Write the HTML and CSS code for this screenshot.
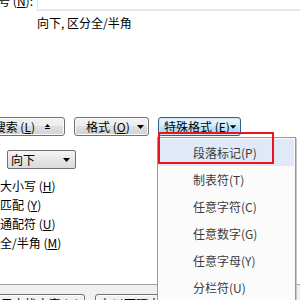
FILE: index.html
```html
<!DOCTYPE html>
<html lang="zh-CN">
<head>
  <meta charset="UTF-8">
  <title>查找和替换</title>
  <link rel="stylesheet" href="styles.css">
</head>
<body>
  <div class="find-row">
    <div class="find-lbl"><span>符号 (<u>N</u>):</span></div>
    <div class="find-box"></div>
  </div>
  <div class="hint">向下, 区分全/半角</div>

  <div class="buttons">
    <div class="btn btn-less">
      <span>更少搜索 (<u>L</u>)</span>
      <svg width="7" height="7" viewBox="0 0 7 7"><path d="M3.5 1 L6 4 L1 4 Z" fill="#000"/><rect x="1" y="5" width="5" height="1" fill="#000"/></svg>
    </div>
    <div class="btn btn-format">
      <span>格式 (<u>O</u>)</span>
      <svg width="7" height="4" viewBox="0 0 7 4"><path d="M0 0 H7 L3.5 4 Z" fill="#000"/></svg>
    </div>
    <div class="btn btn-special">
      <span>特殊格式 (<u>E</u>)</span>
      <svg width="7" height="4" viewBox="0 0 7 4"><path d="M0 0 H7 L3.5 4 Z" fill="#000"/></svg>
    </div>
  </div>

  <div class="select">
    <span>向下</span>
    <svg width="7" height="4" viewBox="0 0 7 4"><path d="M0 0 H7 L3.5 4 Z" fill="#000"/></svg>
  </div>

  <div class="options">
    <div class="opt">大小写 (<u>H</u>)</div>
    <div class="opt">匹配 (<u>Y</u>)</div>
    <div class="opt">通配符 (<u>U</u>)</div>
    <div class="opt">全/半角 (<u>M</u>)</div>
  </div>

  <div class="footer">
    <div class="btn btn-foot-a">突出显示查找内容 (<u>R</u>)</div>
    <div class="btn btn-foot-b">在以下项中查找 (<u>I</u>)</div>
  </div>

  <ul class="menu">
    <li class="menu-item active">段落标记(P)</li>
    <li class="menu-item">制表符(T)</li>
    <li class="menu-item">任意字符(C)</li>
    <li class="menu-item">任意数字(G)</li>
    <li class="menu-item">任意字母(Y)</li>
    <li class="menu-item">分栏符(U)</li>
  </ul>
  <div class="mark"></div>
</body>
</html>
```

FILE: styles.css
```css
body {
  margin: 0;
  width: 300px;
  height: 300px;
  overflow: hidden;
  position: relative;
  background: #fff;
  color: #000;
  font: 12px/14px "Noto Sans CJK SC", "DejaVu Sans", sans-serif;
}
u {
  text-decoration: underline;
}

.find-row {
  display: flex;
  height: 11px;
}
.find-lbl {
  width: 33px;
  padding-right: 4px;
  margin-top: -6px;
  display: flex;
  justify-content: flex-end;
  white-space: nowrap;
  flex-shrink: 0;
}
.find-box {
  flex: 1;
  border-left: 1px solid #e2e2ec;
  border-bottom: 2px solid #e6e4f0;
}

.hint {
  padding-left: 37px;
  margin-top: 5px;
}

.buttons {
  display: flex;
  gap: 9px;
  margin-top: 87px;
  margin-left: -40px;
}
.btn {
  box-sizing: border-box;
  height: 19px;
  display: flex;
  align-items: center;
  justify-content: space-between;
  flex-shrink: 0;
  border: 1px solid #707070;
  border-radius: 3px;
  background: linear-gradient(#f3f3f3 0, #ececec 45%, #dedede 50%, #d3d3d3 100%);
  box-shadow: inset 0 0 0 1px #fbfbfb;
  white-space: nowrap;
  overflow: hidden;
}
.btn-less {
  width: 105px;
  padding-right: 13px;
  justify-content: flex-end;
  gap: 9px;
}
.btn-format { width: 75px; padding: 0 4px 0 11px; }
.btn-special {
  width: 83px;
  padding: 0 4px 0 5px;
  border-color: #2c628b;
  background: linear-gradient(#e6f4fc 0, #d6edfa 45%, #bee3f7 50%, #a6d6f1 100%);
  box-shadow: inset 0 0 0 1px #cfe6f4;
}

.select {
  box-sizing: border-box;
  width: 69px;
  height: 19px;
  margin: 14px 0 0 7px;
  padding: 0 5px 0 3px;
  display: flex;
  align-items: center;
  justify-content: space-between;
  border: 1px solid #707070;
  border-radius: 2px;
  background: linear-gradient(#f5f5f5, #e6e6e6 50%, #dadada);
}

.options {
  margin-top: 7px;
}
.opt {
  line-height: 19px;
}

.footer {
  margin-top: 32px;
  height: 17px;
  padding-top: 9px;
  border-top: 1px solid #a0a0a0;
  background: #f0f0f0;
  display: flex;
  gap: 10px;
}
.btn-foot-a {
  width: 126px;
  margin-left: -41px;
  justify-content: center;
}
.btn-foot-b {
  width: 110px;
  padding-left: 4px;
  justify-content: flex-start;
}

.menu {
  position: absolute;
  left: 157px;
  top: 137px;
  width: 139px;
  height: 170px;
  box-sizing: border-box;
  margin: 0;
  padding: 1px;
  list-style: none;
  background: #fbfbfb;
  border: 1px solid #979797;
  box-shadow: 1px 1px 0 #c8c8c8;
}
.menu-item {
  height: 27px;
  line-height: 27px;
  padding-left: 34px;
  color: #3c3c3c;
}
.menu-item.active {
  background: #dfe9f7;
}

.mark {
  position: absolute;
  left: 158px;
  top: 132px;
  width: 116px;
  height: 32px;
  box-sizing: border-box;
  border: 2px solid #e8141e;
}
```
